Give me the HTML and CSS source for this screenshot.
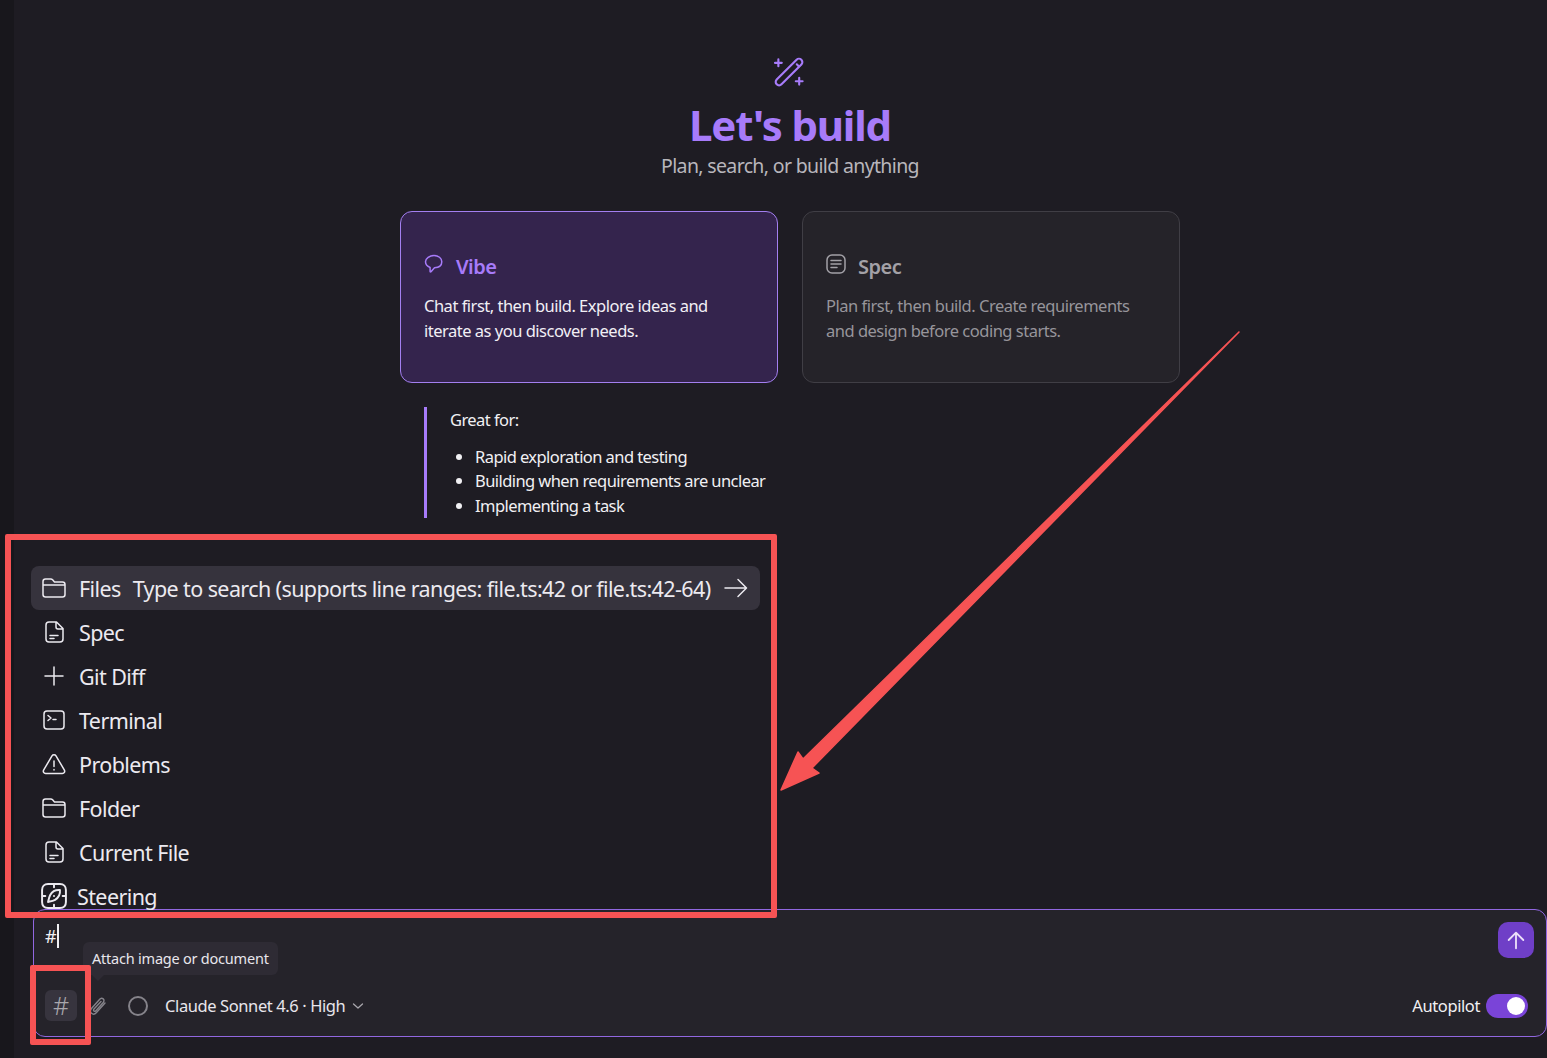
FILE: index.html
```html
<!DOCTYPE html>
<html lang="en">
<head>
    <meta charset="UTF-8">
    <title>Let's build</title>
    <link rel="stylesheet" href="styles.css">
</head>
<body>
    <div class="app">
        <div class="side-strip"></div>
        <main class="chat">
            <section class="welcome">
                <svg class="wand" viewBox="0 0 32 32" fill="none" stroke="currentColor" stroke-width="2.200" stroke-linecap="round" stroke-linejoin="round">
                    <rect x="-3.500" y="-18" width="7" height="36" rx="3.500" transform="translate(15 15.500) rotate(45)"/>
                    <path d="M23 7.500l2 2"/>
                    <path d="M4 2.500v7M.5 6h7"/>
                    <path d="M25.500 21.500v7M22 25h7"/>
                </svg>
                <h1 class="title">Let's build</h1>
                <p class="subtitle">Plan, search, or build anything</p>

                <div class="modes">
                    <div class="mode mode-active">
                        <div class="mode-head">
                            <svg class="mode-icon" viewBox="0 0 20 20" fill="none" stroke="currentColor" stroke-width="1.500" stroke-linejoin="round">
                                <path d="M10 1.500c4.300 0 7.800 2.600 7.800 6.300 0 3.500-3 5.800-7.300 6L7 17.800c-.4.400-.9.100-.9-.4v-3.900C3.500 12.400 1.500 10.400 1.500 7.800c0-3.700 4.200-6.300 8.500-6.300z"/>
                            </svg>
                            <span>Vibe</span>
                        </div>
                        <p>Chat first, then build. Explore ideas and iterate as you discover needs.</p>
                    </div>
                    <div class="mode">
                        <div class="mode-head">
                            <svg class="mode-icon" viewBox="0 0 20 20" fill="none" stroke="currentColor" stroke-width="1.500" stroke-linecap="round">
                                <rect x="1" y="1" width="18" height="18" rx="5"/>
                                <path d="M5 6.500h10M5 10h10M5 13.500h6"/>
                            </svg>
                            <span>Spec</span>
                        </div>
                        <p>Plan first, then build. Create requirements and design before coding starts.</p>
                    </div>
                </div>

                <div class="great-for">
                    <p>Great for:</p>
                    <ul>
                        <li>Rapid exploration and testing</li>
                        <li>Building when requirements are unclear</li>
                        <li>Implementing a task</li>
                    </ul>
                </div>
            </section>

            <section class="composer">
                <ul class="menu">
                    <li class="menu-item selected">
                        <svg class="menu-icon" viewBox="0 0 24 24"><path d="M1 7V5.500C1 4 2 3 3.500 3h5.300c.7 0 1.300.3 1.800.8L12.500 6h8c1.500 0 2.500 1 2.500 2.500v10c0 1.500-1 2.500-2.500 2.500h-17C2 21 1 20 1 18.500zM1 9h22"/></svg>
                        <span>Files</span>
                        <span class="menu-hint">Type to search (supports line ranges: file.ts:42 or file.ts:42-64)</span>
                        <svg class="menu-arrow" viewBox="0 0 24 24"><path d="M1 12h21M14 3.500l8.500 8.500-8.500 8.500"/></svg>
                    </li>
                    <li class="menu-item">
                        <svg class="menu-icon" viewBox="0 0 24 24"><path d="M4 5c0-2 1-3 3-3h7.500L21 8.500V19c0 2-1 3-3 3H7c-2 0-3-1-3-3zM14 2.500V7c0 1.200.8 2 2 2h4.500M8 15.500h8M8 18.500h4"/></svg>
                        <span>Spec</span>
                    </li>
                    <li class="menu-item">
                        <svg class="menu-icon" viewBox="0 0 24 24"><path d="M12 3v18M3 12h18"/></svg>
                        <span>Git Diff</span>
                    </li>
                    <li class="menu-item">
                        <svg class="menu-icon" viewBox="0 0 24 24"><rect x="2" y="3" width="20" height="18" rx="3"/><path d="M6 7.500l3 2.500-3 2.500M11 11.500h3"/></svg>
                        <span>Terminal</span>
                    </li>
                    <li class="menu-item">
                        <svg class="menu-icon" viewBox="0 0 24 24"><path d="M10 3.800c.9-1.500 3.100-1.500 4 0l8.400 14.400c.8 1.500-.2 3.300-2 3.300H3.600c-1.800 0-2.800-1.800-2-3.300zM12 9v5.500M12 17.500v.5"/></svg>
                        <span>Problems</span>
                    </li>
                    <li class="menu-item">
                        <svg class="menu-icon" viewBox="0 0 24 24"><path d="M1 7V5.500C1 4 2 3 3.500 3h5.300c.7 0 1.300.3 1.800.8L12.500 6h8c1.500 0 2.500 1 2.500 2.500v10c0 1.500-1 2.500-2.500 2.500h-17C2 21 1 20 1 18.500zM1 9h22"/></svg>
                        <span>Folder</span>
                    </li>
                    <li class="menu-item">
                        <svg class="menu-icon" viewBox="0 0 24 24"><path d="M4 5c0-2 1-3 3-3h7.500L21 8.500V19c0 2-1 3-3 3H7c-2 0-3-1-3-3zM14 2.500V7c0 1.200.8 2 2 2h4.500M8 15.500h8M8 18.500h4"/></svg>
                        <span>Current File</span>
                    </li>
                    <li class="menu-item steering">
                        <svg class="menu-icon" viewBox="0 0 24 24"><path d="M12 1H6.500C3 1 1 3 1 6.500v11C1 21 3 23 6.500 23h11c3.500 0 5.500-2 5.500-5.500v-11C23 3 21 1 17.500 1zM12 1v3M12 20v3M1 12h3M20 12h3"/><path d="M17.500 6.500c.3 3.500-1 7-4.500 9-1.800 1-4.300 1.500-6.500 2 .5-2.200 1-4.700 2-6.500 2-3.500 5.500-4.800 9-4.500z"/><path d="M12 12v.01"/></svg>
                        <span>Steering</span>
                    </li>
                </ul>

                <div class="input-line">
                    <span class="typed">#</span><span class="caret"></span>
                    <button class="send" type="button">
                        <svg viewBox="0 0 24 24" fill="none" stroke="currentColor" stroke-width="2" stroke-linecap="round" stroke-linejoin="round"><path d="M12 21V4M4 12l8-8 8 8"/></svg>
                    </button>
                </div>

                <div class="tooltip">Attach image or document</div>

                <div class="toolbar">
                    <button class="hash" type="button">#</button>
                    <svg class="clip" viewBox="0 0 20 20" fill="none" stroke="currentColor" stroke-width="1.400" stroke-linecap="round" stroke-linejoin="round">
                        <path d="M17 7l-8.500 9.500c-1.600 1.800-3.600 2-5 .8-1.400-1.200-1.300-3.200.2-5L11.500 3.500c1.100-1.300 2.600-1.500 3.700-.6 1.100 .9 1 2.400 0 3.600l-7.300 8.200c-.6.700-1.400.8-2 .3-.6-.5-.5-1.300.1-2L13 5.500"/>
                    </svg>
                    <span class="status-ring"></span>
                    <span class="model">Claude Sonnet 4.6 · High</span>
                    <svg class="chevron" viewBox="0 0 12 12" fill="none" stroke="currentColor" stroke-width="1.300" stroke-linecap="round" stroke-linejoin="round"><path d="M1.500 4l4.500 4 4.500-4"/></svg>
                    <span class="autopilot">Autopilot</span>
                    <span class="toggle"><span class="knob"></span></span>
                </div>
            </section>
        </main>
    </div>

    <!-- annotations drawn over the screenshot -->
    <div class="mark mark-menu"></div>
    <div class="mark mark-hash"></div>
    <svg class="mark-arrow" viewBox="0 0 1547 1058">
        <path d="M1239 332 812 768 819 773 781 790 798 752 803 759z"/>
    </svg>
</body>
</html>
```

FILE: styles.css
```css
* {
    box-sizing: border-box;
}
html, body {
    margin: 0;
    height: 100%;
    overflow: hidden;
}
body {
    background: #1e1c23;
    color: #f1f0f3;
    font-family: "Noto Sans", "Open Sans", sans-serif;
}
.app {
    display: flex;
    height: 1058px;
}
.side-strip {
    width: 14px;
    background: #18171c;
}
.chat {
    flex: 1;
    display: flex;
    flex-direction: column;
    padding: 0 0 21px 19px;
    min-width: 0;
}
.welcome {
    flex: 1;
    display: flex;
    flex-direction: column;
    align-items: center;
    padding-top: 57px;
}
.wand {
    width: 32px;
    height: 31px;
    color: #a77bfa;
}
.title {
    margin: 12px 0 0;
    color: #a77bfa;
    font-size: 42px;
    line-height: 50px;
    font-weight: 700;
    letter-spacing: -1.2px;
}
.subtitle {
    margin: 4px 0 0;
    color: #b8b6bc;
    font-size: 19.500px;
    line-height: 24px;
    letter-spacing: -0.65px;
}
.modes {
    display: flex;
    gap: 24px;
    margin-top: 33px;
}
.mode {
    width: 378px;
    height: 172px;
    padding: 42px 23px 0;
    background: #252329;
    border: 1px solid #403e45;
    border-radius: 12px;
    color: #97959b;
}
.mode p {
    margin: 15px 0 0;
    font-size: 16.500px;
    line-height: 25px;
    letter-spacing: -0.5px;
}
.mode-head {
    display: flex;
    align-items: center;
    gap: 12px;
    height: 24px;
    font-size: 20px;
    font-weight: 600;
    letter-spacing: -0.5px;
    color: #a3a1a7;
}
.mode-icon {
    width: 20px;
    height: 20px;
    margin-top: -4px;
}
.mode-active {
    background: #34244d;
    border-color: #a37ff0;
    color: #f1eff5;
}
.mode-active .mode-head {
    color: #a77bfa;
}
.great-for {
    align-self: flex-start;
    margin-left: 391px;
    height: 111px;
    margin-top: 24px;
    padding-left: 23px;
    border-left: 3px solid #a77bfa;
    font-size: 16.500px;
    line-height: 24.500px;
    letter-spacing: -0.57px;
}
.great-for p {
    margin: 1px 0 0;
}
.great-for ul {
    margin: 12px 0 0;
    padding-left: 25px;
}
.composer {
    position: relative;
    height: 128px;
    background: #25232a;
    border: 1px solid #9167e0;
    border-radius: 12px;
}
.menu {
    position: absolute;
    left: -3px;
    bottom: calc(100% - 8px);
    width: 729px;
    margin: 0;
    padding: 0;
    list-style: none;
    font-size: 21.500px;
    letter-spacing: -0.6px;
    color: #eceaf0;
}
.menu-item {
    display: flex;
    align-items: center;
    height: 44px;
    padding-left: 11px;
    gap: 12px;
    border-radius: 8px;
}
.menu-item.selected {
    background: #36333d;
}
.menu-icon, .menu-arrow {
    width: 24px;
    height: 24px;
    margin-right: 1px;
    fill: none;
    stroke: currentColor;
    stroke-width: 1.500;
    stroke-linecap: round;
    stroke-linejoin: round;
}
.menu-arrow {
    margin-left: 1px;
}
.steering {
    gap: 10px;
}
.steering .menu-icon {
    margin-left: -1px;
    margin-right: 0;
    stroke-width: 1.800;
    height: 26px;
    width: 26px;
}
.input-line {
    display: flex;
    align-items: flex-start;
    height: 80px;
    padding: 12px 12px 0 11px;
}
.typed {
    font-size: 18px;
    line-height: 28px;
}
.caret {
    width: 2px;
    height: 24px;
    margin: 2px 0 0;
    background: #f1f0f3;
}
.send {
    margin-left: auto;
    width: 36px;
    height: 36px;
    padding: 7px;
    border: 0;
    border-radius: 10px;
    background: #6f3fc7;
    color: #ecdff9;
}
.send svg {
    display: block;
    width: 22px;
    height: 22px;
}
.tooltip {
    position: absolute;
    left: 49px;
    top: 32px;
    height: 33px;
    padding: 0 9px;
    border-radius: 6px;
    background: #2e2b34;
    color: #e8e6ec;
    font-size: 14.500px;
    line-height: 33px;
    letter-spacing: -0.22px;
}
.tooltip::after {
    content: "";
    position: absolute;
    left: 9px;
    top: 100%;
    border: 6px solid transparent;
    border-top-color: #2e2b34;
}
.toolbar {
    display: flex;
    align-items: center;
    padding: 0 18px 0 11px;
    font-size: 16.500px;
    letter-spacing: -0.4px;
}
.hash {
    width: 32px;
    height: 31px;
    padding: 0;
    border: 0;
    border-radius: 6px;
    background: #37343e;
    color: #a9a7ad;
    font-family: inherit;
    font-size: 25px;
    font-weight: 300;
    line-height: 31px;
}
.clip {
    width: 20px;
    height: 20px;
    margin-left: 11px;
    color: #85838a;
}
.status-ring {
    width: 20px;
    height: 20px;
    margin-left: 20px;
    border: 2px solid #85838a;
    border-radius: 50%;
}
.model {
    margin-left: 17px;
    color: #e8e6ec;
}
.chevron {
    width: 12px;
    height: 12px;
    margin-left: 7px;
    color: #a9a7ad;
}
.autopilot {
    margin-left: auto;
}
.toggle {
    display: flex;
    justify-content: flex-end;
    align-items: center;
    width: 42px;
    height: 24px;
    margin-left: 6px;
    padding-right: 3px;
    border-radius: 12px;
    background: #7a44d8;
}
.knob {
    width: 18px;
    height: 18px;
    border-radius: 50%;
    background: #fff;
}
.mark {
    position: absolute;
    border: 6px solid #f65354;
    border-radius: 2px;
}
.mark-menu {
    left: 5px;
    top: 534px;
    width: 772px;
    height: 384px;
}
.mark-hash {
    left: 30px;
    top: 965px;
    width: 61px;
    height: 80px;
}
.mark-arrow {
    position: absolute;
    left: 0;
    top: 0;
    width: 1547px;
    height: 1058px;
    fill: #f65354;
    stroke: #f65354;
    stroke-width: 1.500;
    stroke-linejoin: round;
}
```
